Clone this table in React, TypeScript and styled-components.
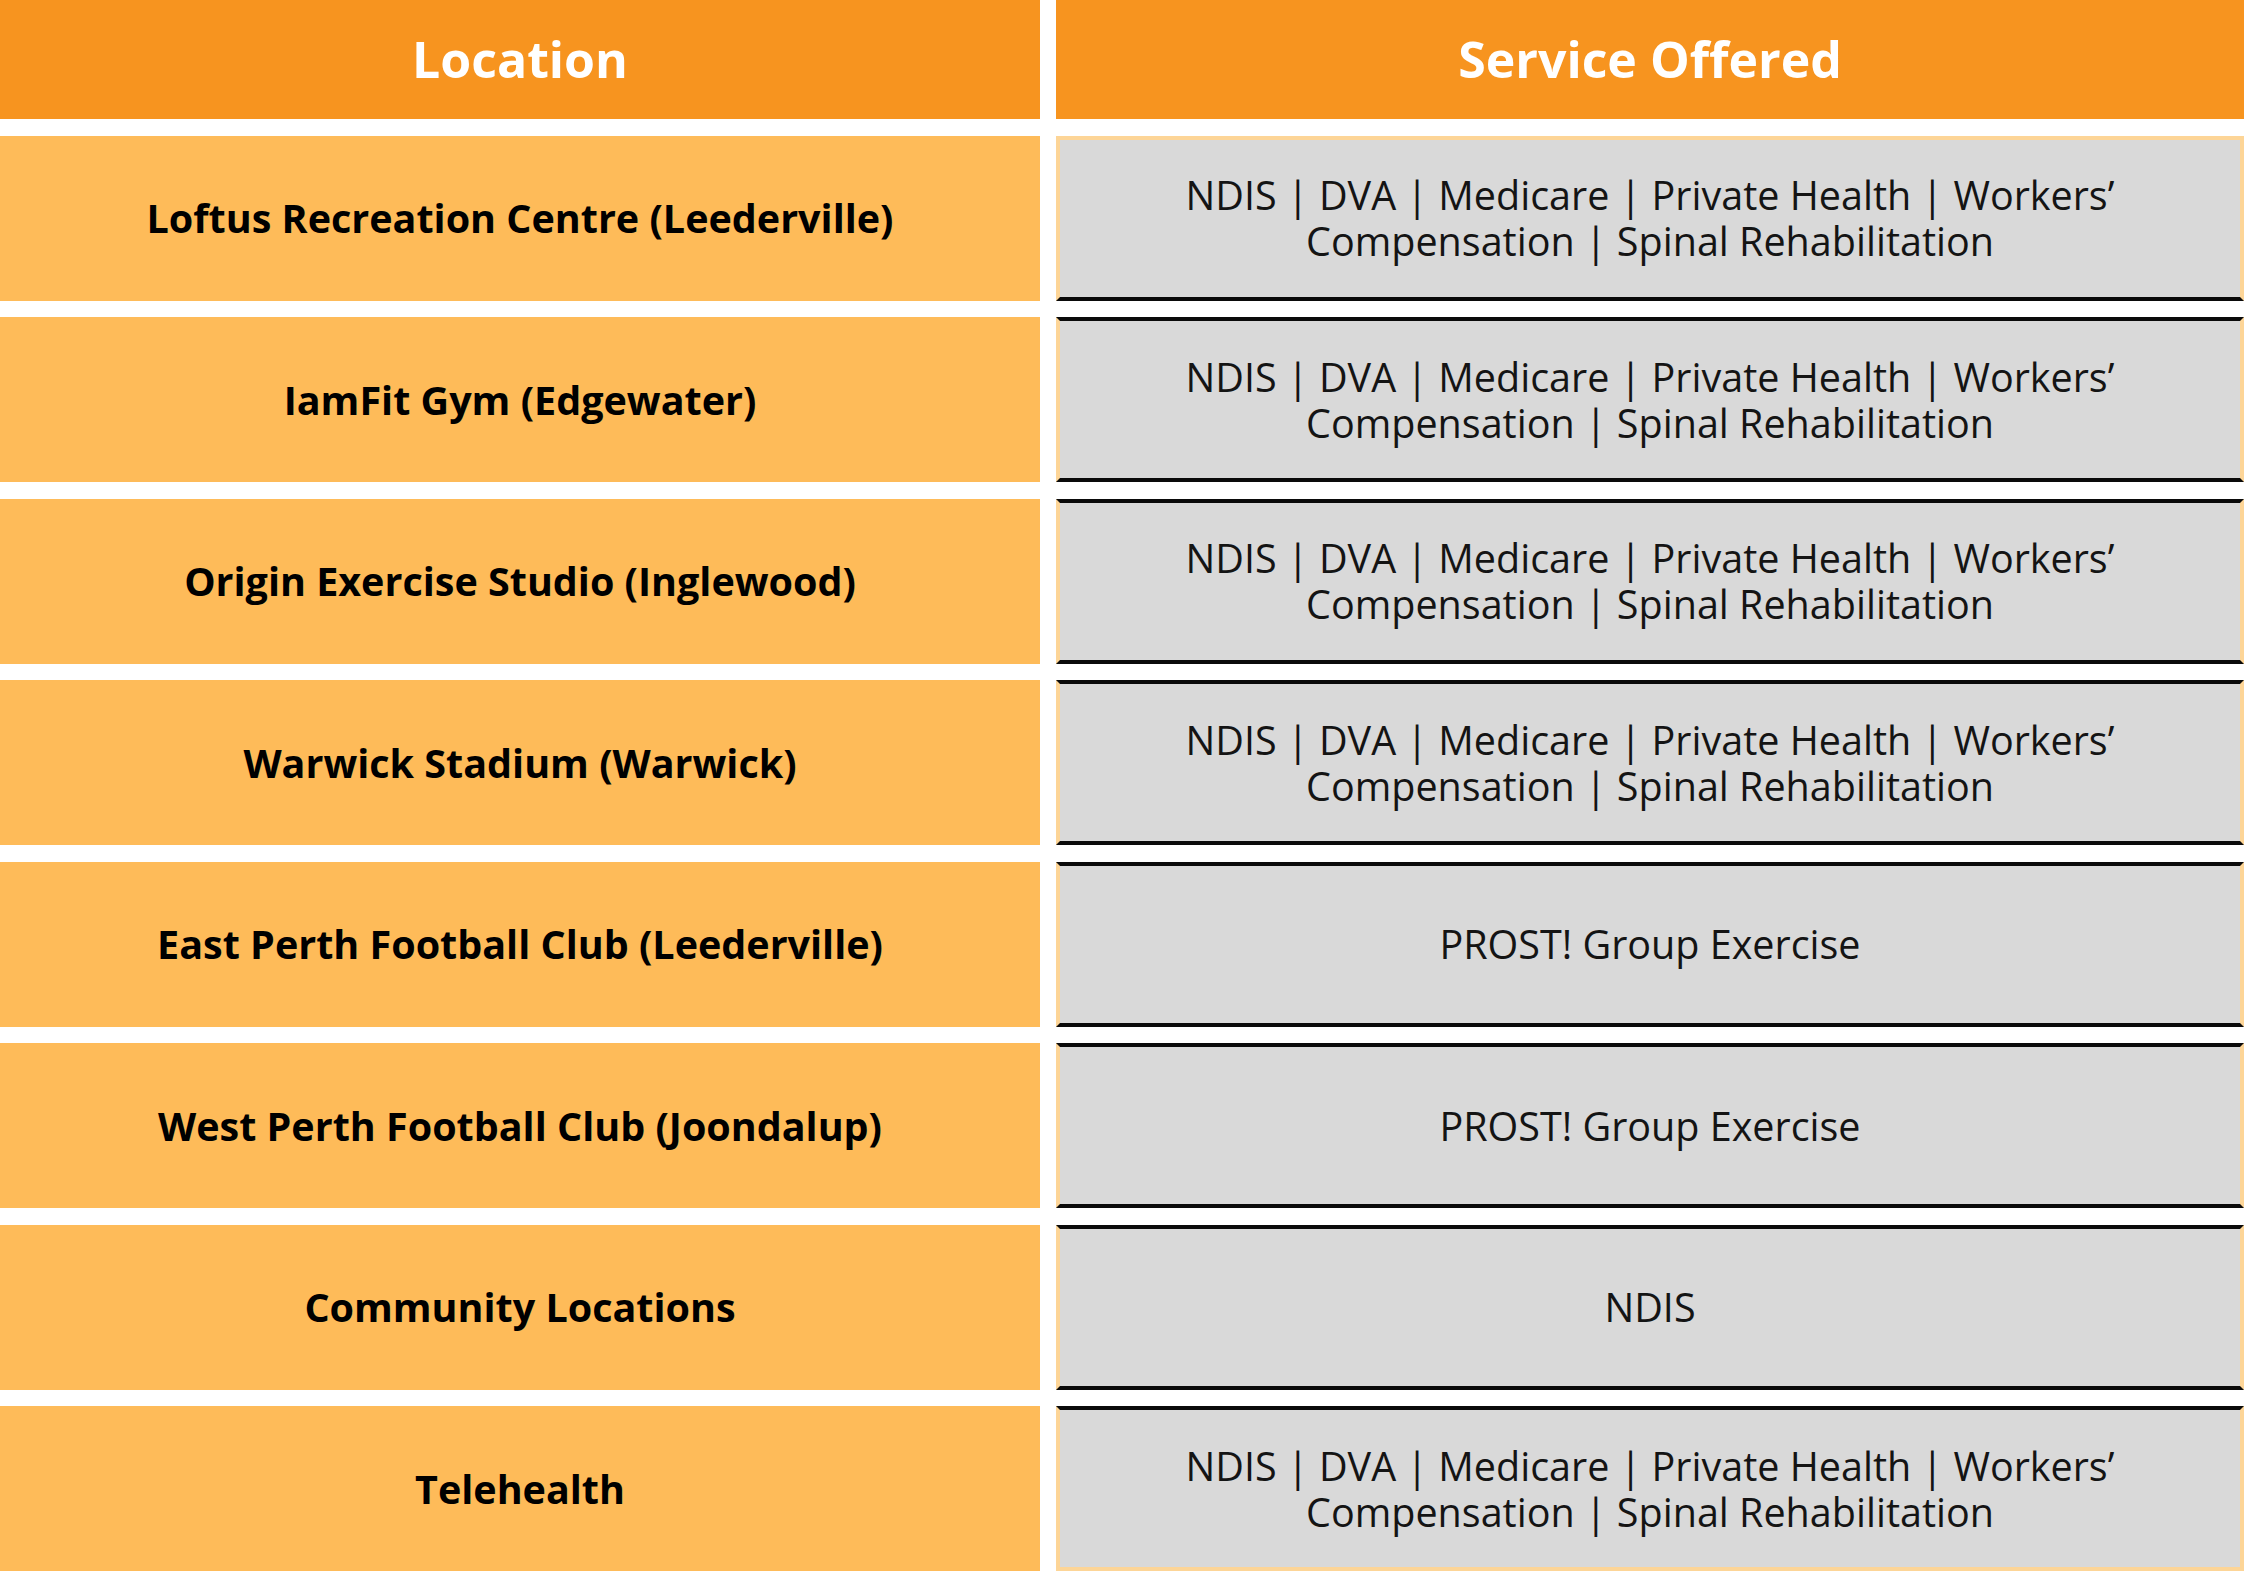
import * as React from 'react';
import styled, { createGlobalStyle } from 'styled-components';

const GlobalStyle = createGlobalStyle`
  html, body {
    margin: 0;
    padding: 0;
    background: #ffffff;
  }
  body {
    font-family: "Open Sans", "Noto Sans", sans-serif;
  }
`;

const FULL_SERVICES = 'NDIS | DVA | Medicare | Private Health | Workers’\nCompensation | Spinal Rehabilitation';

interface RowI {
  location: string;
  services: string;
}

const rows: RowI[] = [
  { location: 'Loftus Recreation Centre (Leederville)', services: FULL_SERVICES },
  { location: 'IamFit Gym (Edgewater)', services: FULL_SERVICES },
  { location: 'Origin Exercise Studio (Inglewood)', services: FULL_SERVICES },
  { location: 'Warwick Stadium (Warwick)', services: FULL_SERVICES },
  { location: 'East Perth Football Club (Leederville)', services: 'PROST! Group Exercise' },
  { location: 'West Perth Football Club (Joondalup)', services: 'PROST! Group Exercise' },
  { location: 'Community Locations', services: 'NDIS' },
  { location: 'Telehealth', services: FULL_SERVICES },
];

const Table = styled.div`
  display: grid;
  grid-template-columns: 1040px 1188px;
  grid-template-rows: 119px;
  grid-auto-rows: 165px;
  column-gap: 16px;
  row-gap: 16.5px;
  width: 2245px;
  padding-bottom: 16px;
`;

const HeaderCell = styled.div`
  background-color: #f7941f;
  color: #ffffff;
  font-weight: 700;
  font-size: 50px;
  display: flex;
  align-items: center;
  justify-content: center;
  padding-bottom: 2px;
`;

const LocationCell = styled.div`
  background-color: #febb59;
  color: #000000;
  font-weight: 700;
  font-size: 39.5px;
  display: flex;
  align-items: center;
  justify-content: center;
  text-align: center;
`;

interface ServiceCellI {
  $first: boolean;
  $last: boolean;
}

const ServiceCell = styled.div<ServiceCellI>`
  box-sizing: border-box;
  background-color: #d9d9d9;
  border-left: 4px solid #fdd597;
  border-right: 4px solid #fdd597;
  border-top: 4px solid ${({ $first }) => ($first ? '#fdd597' : '#0a0a0a')};
  border-bottom: 4px solid ${({ $last }) => ($last ? '#fdd597' : '#0a0a0a')};
  color: #141414;
  display: flex;
  align-items: center;
  justify-content: center;
`;

const ServiceText = styled.p`
  margin: 0;
  font-size: 39.5px;
  line-height: 46px;
  text-align: center;
  white-space: pre-line;
`;

const App = () => (
  <>
    <GlobalStyle />
    <Table>
      <HeaderCell>Location</HeaderCell>
      <HeaderCell>Service Offered</HeaderCell>
      {rows.map((row, index) => (
        <React.Fragment key={row.location}>
          <LocationCell>{row.location}</LocationCell>
          <ServiceCell $first={index === 0} $last={index === rows.length - 1}>
            <ServiceText>{row.services}</ServiceText>
          </ServiceCell>
        </React.Fragment>
      ))}
    </Table>
  </>
);

export default App;
